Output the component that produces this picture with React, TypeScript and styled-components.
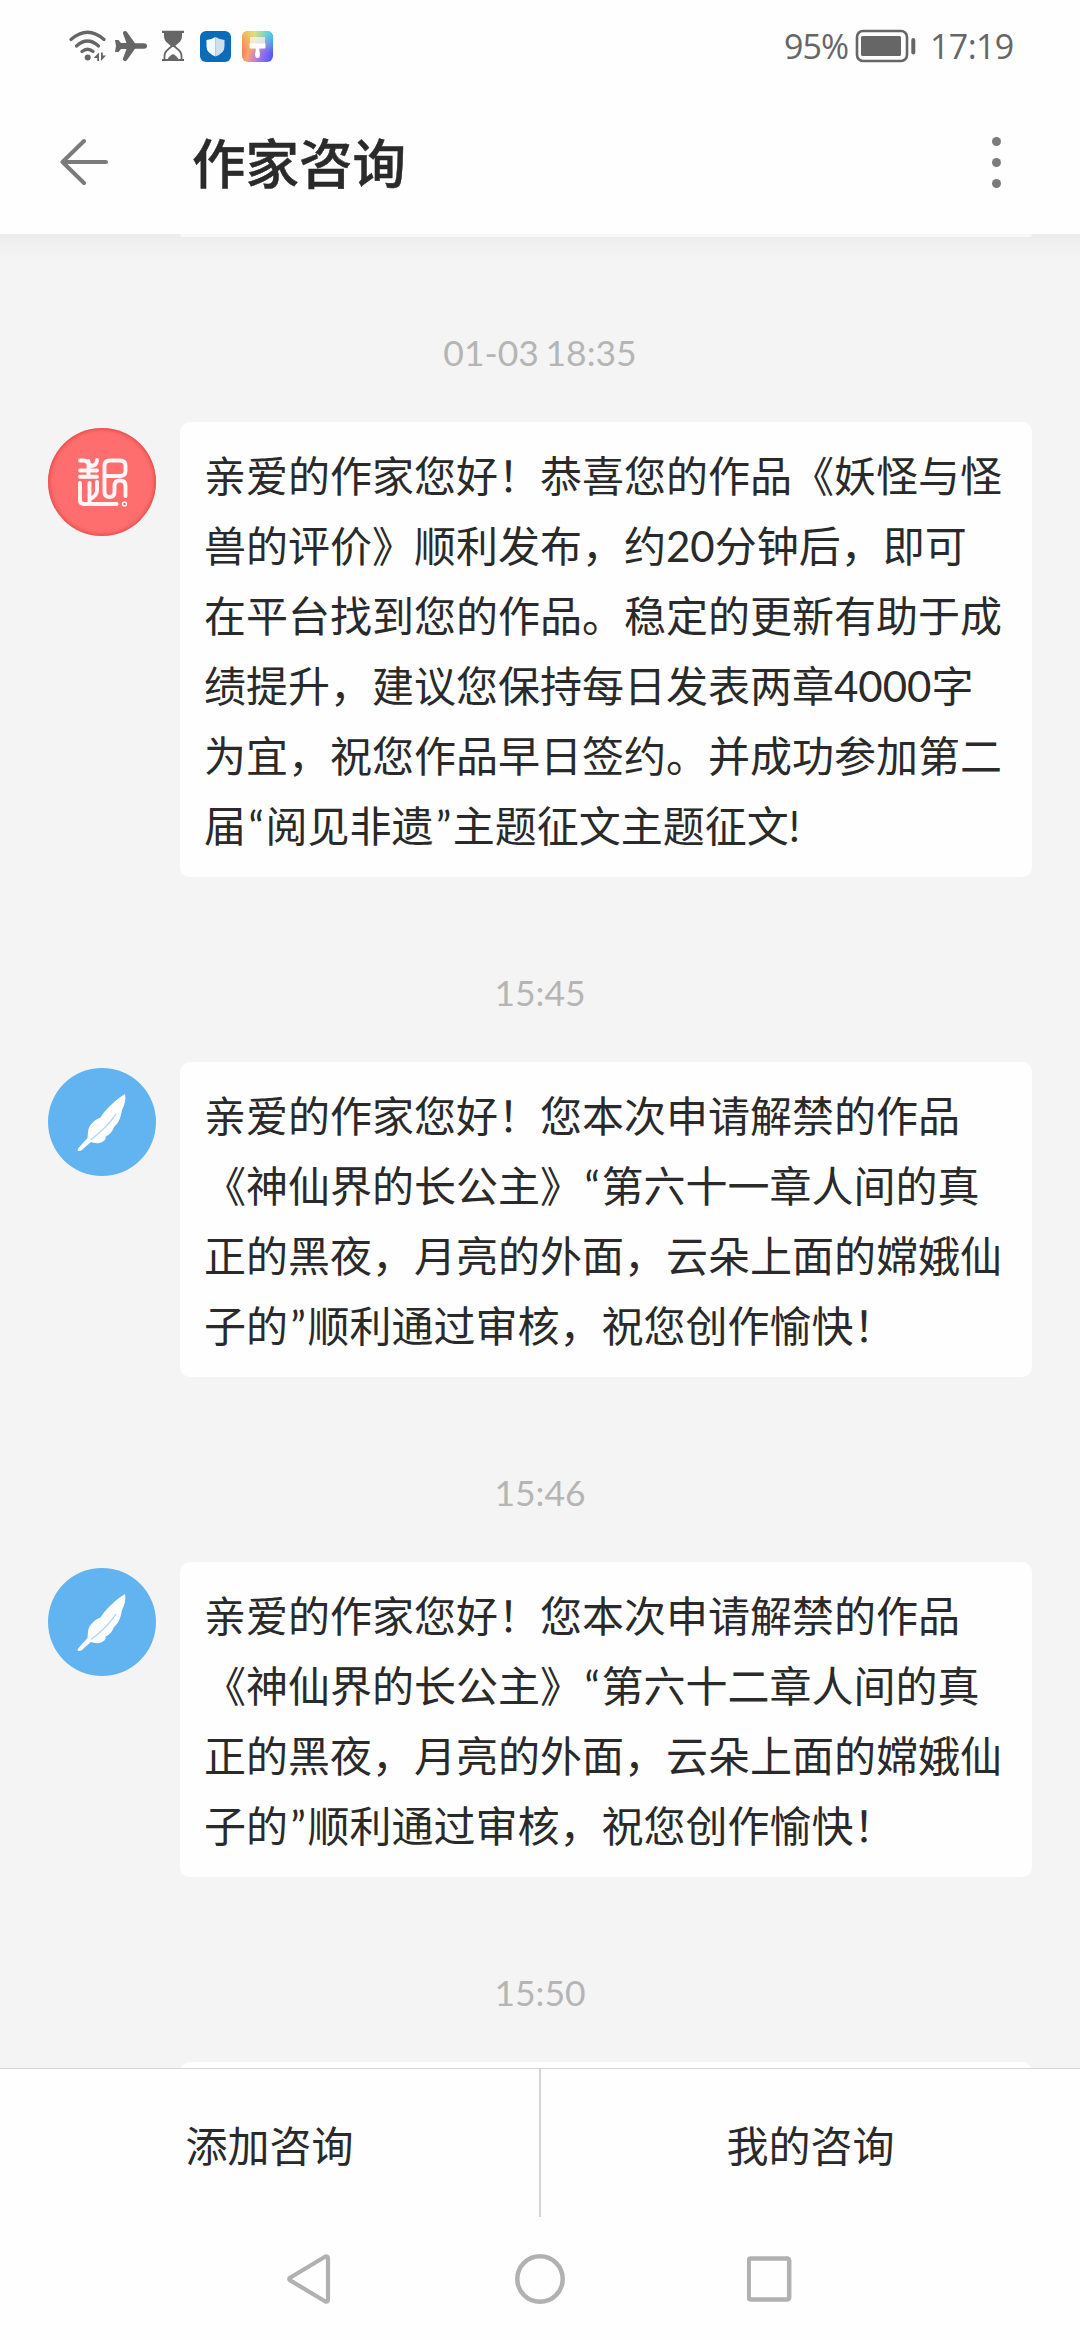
import React from 'react';
import styled, { createGlobalStyle } from 'styled-components';

const GlobalStyle = createGlobalStyle`
  * { box-sizing: border-box; }
  body { margin: 0; background: #fff; }
`;

const Screen = styled.div`
  width: 1080px;
  height: 2340px;
  display: flex;
  flex-direction: column;
  overflow: hidden;
  background: #fefefe;
  color: #2a2a2a;
  font-family: 'Lato', 'Noto Sans CJK SC', sans-serif;
`;

const StatusBar = styled.div`
  height: 90px;
  flex: none;
  display: flex;
  align-items: center;
  justify-content: space-between;
  padding: 2px 65px 0 69px;
  color: #666;
`;

const StatusIcons = styled.div`
  display: flex;
  align-items: center;
`;

const StatusInfo = styled.div`
  display: flex;
  align-items: center;
  font-family: 'Open Sans', sans-serif;
  font-size: 34px;
  line-height: 40px;
`;

const Level = styled.span`
  width: 71px;
  letter-spacing: -1px;
  white-space: nowrap;
`;

const Clock = styled.span`
  width: 85px;
  margin-left: 13px;
  letter-spacing: -0.6px;
  white-space: nowrap;
`;

const Header = styled.header`
  height: 144px;
  flex: none;
  display: flex;
  align-items: center;
  padding: 0 75px 0 60px;
`;

const Title = styled.h1`
  flex: 1;
  margin: 2px 0 0 83px;
  font-size: 53.5px;
  line-height: 80px;
  font-weight: 500;
  -webkit-text-stroke: 0.5px #2a2a2a;
`;

const Dots = styled.div`
  display: flex;
  flex-direction: column;
  gap: 12px;
  margin-right: 4px;
`;

const Dot = styled.i`
  width: 9px;
  height: 9px;
  border-radius: 50%;
  background: #7b7b7b;
`;

const Feed = styled.main`
  height: 1834px;
  flex: none;
  overflow: hidden;
  background: linear-gradient(#ececec, #f4f4f4 24px);
`;

const PreviousBubble = styled.div`
  height: 3px;
  margin: 0 48px 0 180px;
  border-radius: 0 0 12px 12px;
  background: #f8f8f8;
`;

const Stamp = styled.div`
  height: 185px;
  padding-top: 91px;
  text-align: center;
  font-size: 35.5px;
  line-height: 50px;
  word-spacing: -2.5px;
  color: #b5b5b5;
`;

const Message = styled.section`
  display: flex;
  align-items: flex-start;
  gap: 24px;
  padding: 0 48px;
`;

const Avatar = styled.div<{ $fill: string; $edge: string }>`
  width: 108px;
  height: 108px;
  flex: none;
  margin-top: 6px;
  border-radius: 50%;
  background: ${(p) => p.$fill};
  box-shadow: inset 0 0 4px 1px ${(p) => p.$edge};
`;

const Bubble = styled.div`
  width: 852px;
  min-height: 35px;
  padding: 19px 0 16px 24px;
  border-radius: 10px;
  background: #fefefe;
`;

const Line = styled.div`
  height: 70px;
  font-size: 42px;
  line-height: 70px;
  white-space: nowrap;
`;

const Quote = styled.span`
  padding: 0 1.5px 0 2.5px;
`;

const Actions = styled.footer`
  height: 149px;
  flex: none;
  display: flex;
  border-top: 1px solid #d4d4d4;
`;

const Action = styled.button`
  flex: 1;
  border: 0;
  padding: 0;
  background: transparent;
  color: inherit;
  font: inherit;
  font-size: 42px;

  &:first-child {
    flex: 0 0 539px;
  }

  & + & {
    border-left: 2px solid #d4d4d4;
  }
`;

const NavBar = styled.nav`
  flex: 1;
  display: flex;
  align-items: flex-start;
  justify-content: space-between;
  padding: 37px 285px 0;
`;

const SealIcon = () => (
  <svg width="108" height="108" viewBox="0 0 108 108" fill="none" stroke="#fff" strokeWidth="3.9" strokeLinecap="round" strokeLinejoin="round" opacity=".94">
    <path d="M32 32.500h3q3.500 0 5 2.500t4 2.500M49 32q0 5.500-6 6M32 42.500h17M32 48.800h17M40.500 33v16" />
    <path d="M32 55v17q0 4 4 4h32.500M41.500 55v20M49 54v8q0 6-7 9" />
    <path d="M56.500 48h15.500q5.500 0 5.500-5v-5q0-5.500-5.500-5.500H62q-5.500 0-5.500 5.500v26q0 5 5 5t5-5v-6q0-5.500 5.500-5.500t5.500 5.500v10" />
    <circle cx="76.500" cy="76" r=".7" />
  </svg>
);

const FeatherIcon = () => (
  <svg width="108" height="108" viewBox="0 0 108 108">
    <path d="M77 26C68 31 57 42 52 50C49 50 40 57 40 64L39.500 70C36 74 30 80 29.500 82C30 84 34 83 36 80L43 74C48 76 55 76 58 70L57 69C62 67 65 62 66 59C72 54 73 47 74 42C77 36 78 31 77 26Z" fill="#fefefe" />
    <path d="M43 71.500C53 64 61 57 68 46" fill="none" stroke="#a9d4f6" strokeWidth="1.300" />
  </svg>
);

const WifiIcon = () => (
  <svg width="38" height="32" viewBox="0 0 38 32" fill="none" stroke="#666" strokeWidth="3.200" strokeLinecap="round">
    <path d="M2 9.500Q18.500-5 35 9.500M7.500 16Q18.500 6 29.500 16M13 21.500Q18.500 17 24 21.500" />
    <circle cx="18.700" cy="27.500" r="3" fill="#666" stroke="none" />
    <path d="M30 22.500v8.500h-1.800v-3H24.500zM32 31v-8.500h1.800v3H37z" fill="#666" stroke="none" />
  </svg>
);

const PlaneIcon = () => (
  <svg width="34" height="32" viewBox="0 0 34 32" fill="#666">
    <path d="M33 16q0 2.700-3 2.800h-9L13 30q-1 1.500-2.500 1-2-.6-1.500-2.500L12.500 19H7l-2.500 3H1l1-6-1-6h3.500L7 13h5.500L9 3.500Q8.500 1.500 10.500 1 12 .5 13 2l8 11.200h9q3 .1 3 2.800z" />
  </svg>
);

const HourglassIcon = () => (
  <svg width="24" height="32" viewBox="0 0 24 32">
    <path d="M1 1.800h22M1 30h22" stroke="#666" strokeWidth="2.200" />
    <path d="M3 2h18v4q0 5-4 7.500L13.500 16.500Q12 17.500 10.500 16.500L7 13.500Q3 11 3 6z" fill="#666" />
    <path d="M3.500 30v-4q0-4 4-7l3.500-3h2l3.500 3q4 3 4 7v4" fill="none" stroke="#666" strokeWidth="1.800" />
    <path d="M6.500 29.500q1-3 5.500-5.500 4.500 2.500 5.500 5.500z" fill="#666" />
  </svg>
);

const ShieldIcon = () => (
  <svg width="31" height="31" viewBox="0 0 31 31">
    <rect width="31" height="31" rx="6" fill="#0b6dba" />
    <path d="M15.500 6Q20 8.800 24.500 9v6.500Q24.500 22 15.500 25.500z" fill="#cfdfeb" />
    <path d="M15.500 6Q11 8.800 6.500 9v6.500Q6.500 22 15.500 25.500z" fill="#f4f9fd" />
  </svg>
);

const BrushIcon = () => (
  <svg width="31" height="31" viewBox="0 0 31 31">
    <defs>
      <linearGradient id="brushBase" x1="0" y1="0.300" x2="1" y2="0.600">
        <stop offset="0" stopColor="#fa6a58" />
        <stop offset=".3" stopColor="#f9a56c" />
        <stop offset=".6" stopColor="#b678e8" />
        <stop offset="1" stopColor="#5a5cf0" />
      </linearGradient>
      <linearGradient id="brushTop" x1="0" y1="0" x2="1" y2="0">
        <stop offset="0" stopColor="#fbb04e" />
        <stop offset=".4" stopColor="#d8e27c" />
        <stop offset="1" stopColor="#35cdf8" />
      </linearGradient>
      <linearGradient id="brushFade" x1="0" y1="0" x2="0" y2="1">
        <stop offset=".1" stopColor="#fff" />
        <stop offset=".7" stopColor="#000" />
      </linearGradient>
      <mask id="brushMask"><rect width="31" height="31" fill="url(#brushFade)" /></mask>
    </defs>
    <rect width="31" height="31" rx="6" fill="url(#brushBase)" />
    <rect width="31" height="31" rx="6" fill="url(#brushTop)" mask="url(#brushMask)" />
    <path d="M8 6h15v7H8z" fill="#fff" opacity=".65" />
    <path d="M7.500 12.500h16V16q0 1.500-1.500 1.500h-4.700v2.500q.6 1 .6 3.500 0 3.500-2.400 3.500t-2.400-3.500q0-2.500.6-3.500v-2.500H9q-1.500 0-1.500-1.500z" fill="#fff" />
  </svg>
);

const BatteryIcon = () => (
  <svg width="62" height="34" viewBox="0 0 62 34">
    <rect x="2" y="2" width="50" height="30" rx="6" fill="none" stroke="#666" strokeWidth="2.600" />
    <rect x="6" y="7" width="40" height="20" rx="1.500" fill="#666" />
    <rect x="56.300" y="9" width="4" height="16.500" rx="2" fill="#666" />
  </svg>
);

const BackIcon = () => (
  <svg width="49" height="48" viewBox="0 0 49 48" fill="none" stroke="#7b7b7b" strokeWidth="4" strokeLinecap="round" strokeLinejoin="round">
    <path d="M24 3L2.500 24L24 45M2.500 24H46" />
  </svg>
);

const NavIcons = () => (
  <>
    <svg width="48" height="52" viewBox="0 1 48 52" fill="none" stroke="#b1b1b1" strokeWidth="4.200" strokeLinejoin="round">
      <path d="M5 24.700Q3.500 26 5 27.300L40 48.200Q43 49.500 43 46.500V5.500Q43 2.500 40 3.800Z" />
    </svg>
    <svg width="50" height="50" viewBox="0 0 50 50" fill="none" stroke="#b1b1b1" strokeWidth="4.500">
      <circle cx="25" cy="25" r="22.700" />
    </svg>
    <svg width="48" height="50" viewBox="0 0 48 50" fill="none" stroke="#b1b1b1" strokeWidth="4.500">
      <rect x="1.700" y="4.500" width="40.500" height="41" rx="2" />
    </svg>
  </>
);

type Sender = 'seal' | 'feather';

const messages: { time: string; sender: Sender; lines: string[] }[] = [
  {
    time: '01-03 18:35',
    sender: 'seal',
    lines: [
      '亲爱的作家您好！恭喜您的作品《妖怪与怪',
      '兽的评价》顺利发布，约20分钟后，即可',
      '在平台找到您的作品。稳定的更新有助于成',
      '绩提升，建议您保持每日发表两章4000字',
      '为宜，祝您作品早日签约。并成功参加第二',
      '届“阅见非遗”主题征文主题征文!',
    ],
  },
  {
    time: '15:45',
    sender: 'feather',
    lines: [
      '亲爱的作家您好！您本次申请解禁的作品',
      '《神仙界的长公主》“第六十一章人间的真',
      '正的黑夜，月亮的外面，云朵上面的嫦娥仙',
      '子的”顺利通过审核，祝您创作愉快！',
    ],
  },
  {
    time: '15:46',
    sender: 'feather',
    lines: [
      '亲爱的作家您好！您本次申请解禁的作品',
      '《神仙界的长公主》“第六十二章人间的真',
      '正的黑夜，月亮的外面，云朵上面的嫦娥仙',
      '子的”顺利通过审核，祝您创作愉快！',
    ],
  },
  { time: '15:50', sender: 'feather', lines: [] },
];

const withQuotes = (line: string) =>
  line.split(/([“”])/).map((part, i) => (i % 2 ? <Quote key={i}>{part}</Quote> : part));

export default function App() {
  return (
    <Screen lang="zh-CN">
      <GlobalStyle />
      <StatusBar>
        <StatusIcons>
          <WifiIcon />
          <svg width="7" height="1" />
          <PlaneIcon />
          <svg width="13" height="1" />
          <HourglassIcon />
          <svg width="15" height="1" />
          <ShieldIcon />
          <svg width="11" height="1" />
          <BrushIcon />
        </StatusIcons>
        <StatusInfo>
          <Level>95%</Level>
          <BatteryIcon />
          <Clock>17:19</Clock>
        </StatusInfo>
      </StatusBar>
      <Header>
        <BackIcon />
        <Title>作家咨询</Title>
        <Dots>
          <Dot />
          <Dot />
          <Dot />
        </Dots>
      </Header>
      <Feed>
        <PreviousBubble />
        {messages.map((m) => (
          <React.Fragment key={m.time}>
            <Stamp>{m.time}</Stamp>
            <Message>
              <Avatar
                $fill={m.sender === 'seal' ? '#ff6e6e' : '#62b4f1'}
                $edge={m.sender === 'seal' ? '#e04444' : 'transparent'}
              >
                {m.sender === 'seal' ? <SealIcon /> : <FeatherIcon />}
              </Avatar>
              <Bubble>
                {m.lines.map((l) => (
                  <Line key={l}>{withQuotes(l)}</Line>
                ))}
              </Bubble>
            </Message>
          </React.Fragment>
        ))}
      </Feed>
      <Actions>
        <Action>添加咨询</Action>
        <Action>我的咨询</Action>
      </Actions>
      <NavBar>
        <NavIcons />
      </NavBar>
    </Screen>
  );
}
